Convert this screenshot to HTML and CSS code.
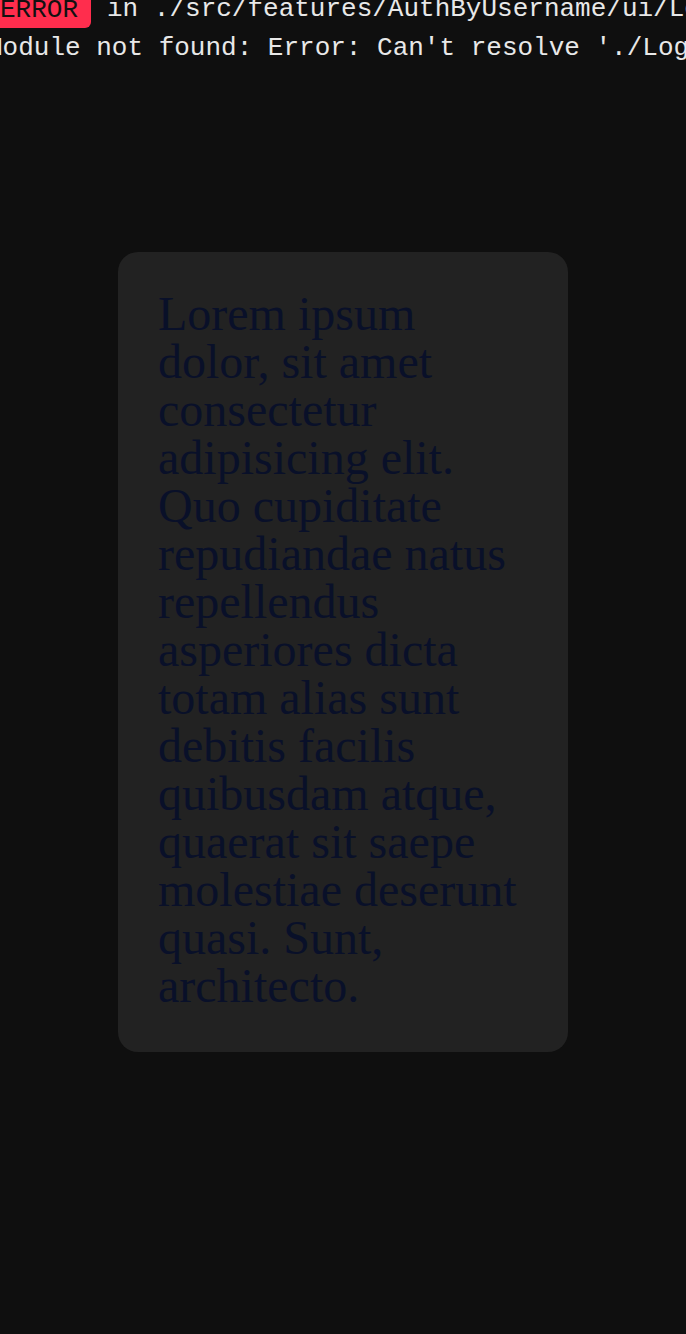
FILE: index.html
```html
<!DOCTYPE html>
<html>
<head>
<meta charset="utf-8">
<link rel="stylesheet" href="styles.css">
</head>
<body>
<div class="overlay">
  <div class="row1"><span class="badge">ERROR</span><span class="path">in ./src/features/AuthByUsername/ui/LoginForm/LoginForm.tsx</span></div>
  <div class="msg">Module not found: Error: Can't resolve './LoginForm.module.scss'</div>
</div>
<div class="stage">
  <div class="card">
    <p class="text">Lorem ipsum dolor, sit amet consectetur adipisicing elit. Quo cupiditate repudiandae natus repellendus asperiores dicta totam alias sunt debitis facilis quibusdam atque, quaerat sit saepe molestiae deserunt quasi. Sunt, architecto.</p>
  </div>
</div>
</body>
</html>
```
FILE: styles.css
```css
html, body {
  margin: 0;
  padding: 0;
  background: #0f0f0f;
  width: 686px;
  height: 1334px;
  overflow: hidden;
}
.overlay {
  margin-left: -13px;
  margin-top: -9px;
  font-family: "Liberation Mono", "DejaVu Sans Mono", monospace;
  font-size: 26px;
  line-height: 31px;
  color: #e8e8e8;
  white-space: nowrap;
  overflow: hidden;
  width: 699px;
}
.row1 {
  display: flex;
  align-items: center;
  gap: 16px;
}
.badge {
  background: #ff2d4d;
  color: #111;
  padding: 4px 13px 2px;
  border-radius: 6px;
}
.msg {
  margin-top: 5px;
}
.stage {
  display: flex;
  justify-content: center;
  padding-top: 188px;
}
.card {
  width: 450px;
  height: 800px;
  box-sizing: border-box;
  background: #222222;
  border-radius: 20px;
  padding: 38px 40px;
}
.text {
  margin: 0;
  font-family: "Liberation Serif", "Times New Roman", serif;
  font-size: 48px;
  line-height: 48px;
  color: #091029;
}
```
